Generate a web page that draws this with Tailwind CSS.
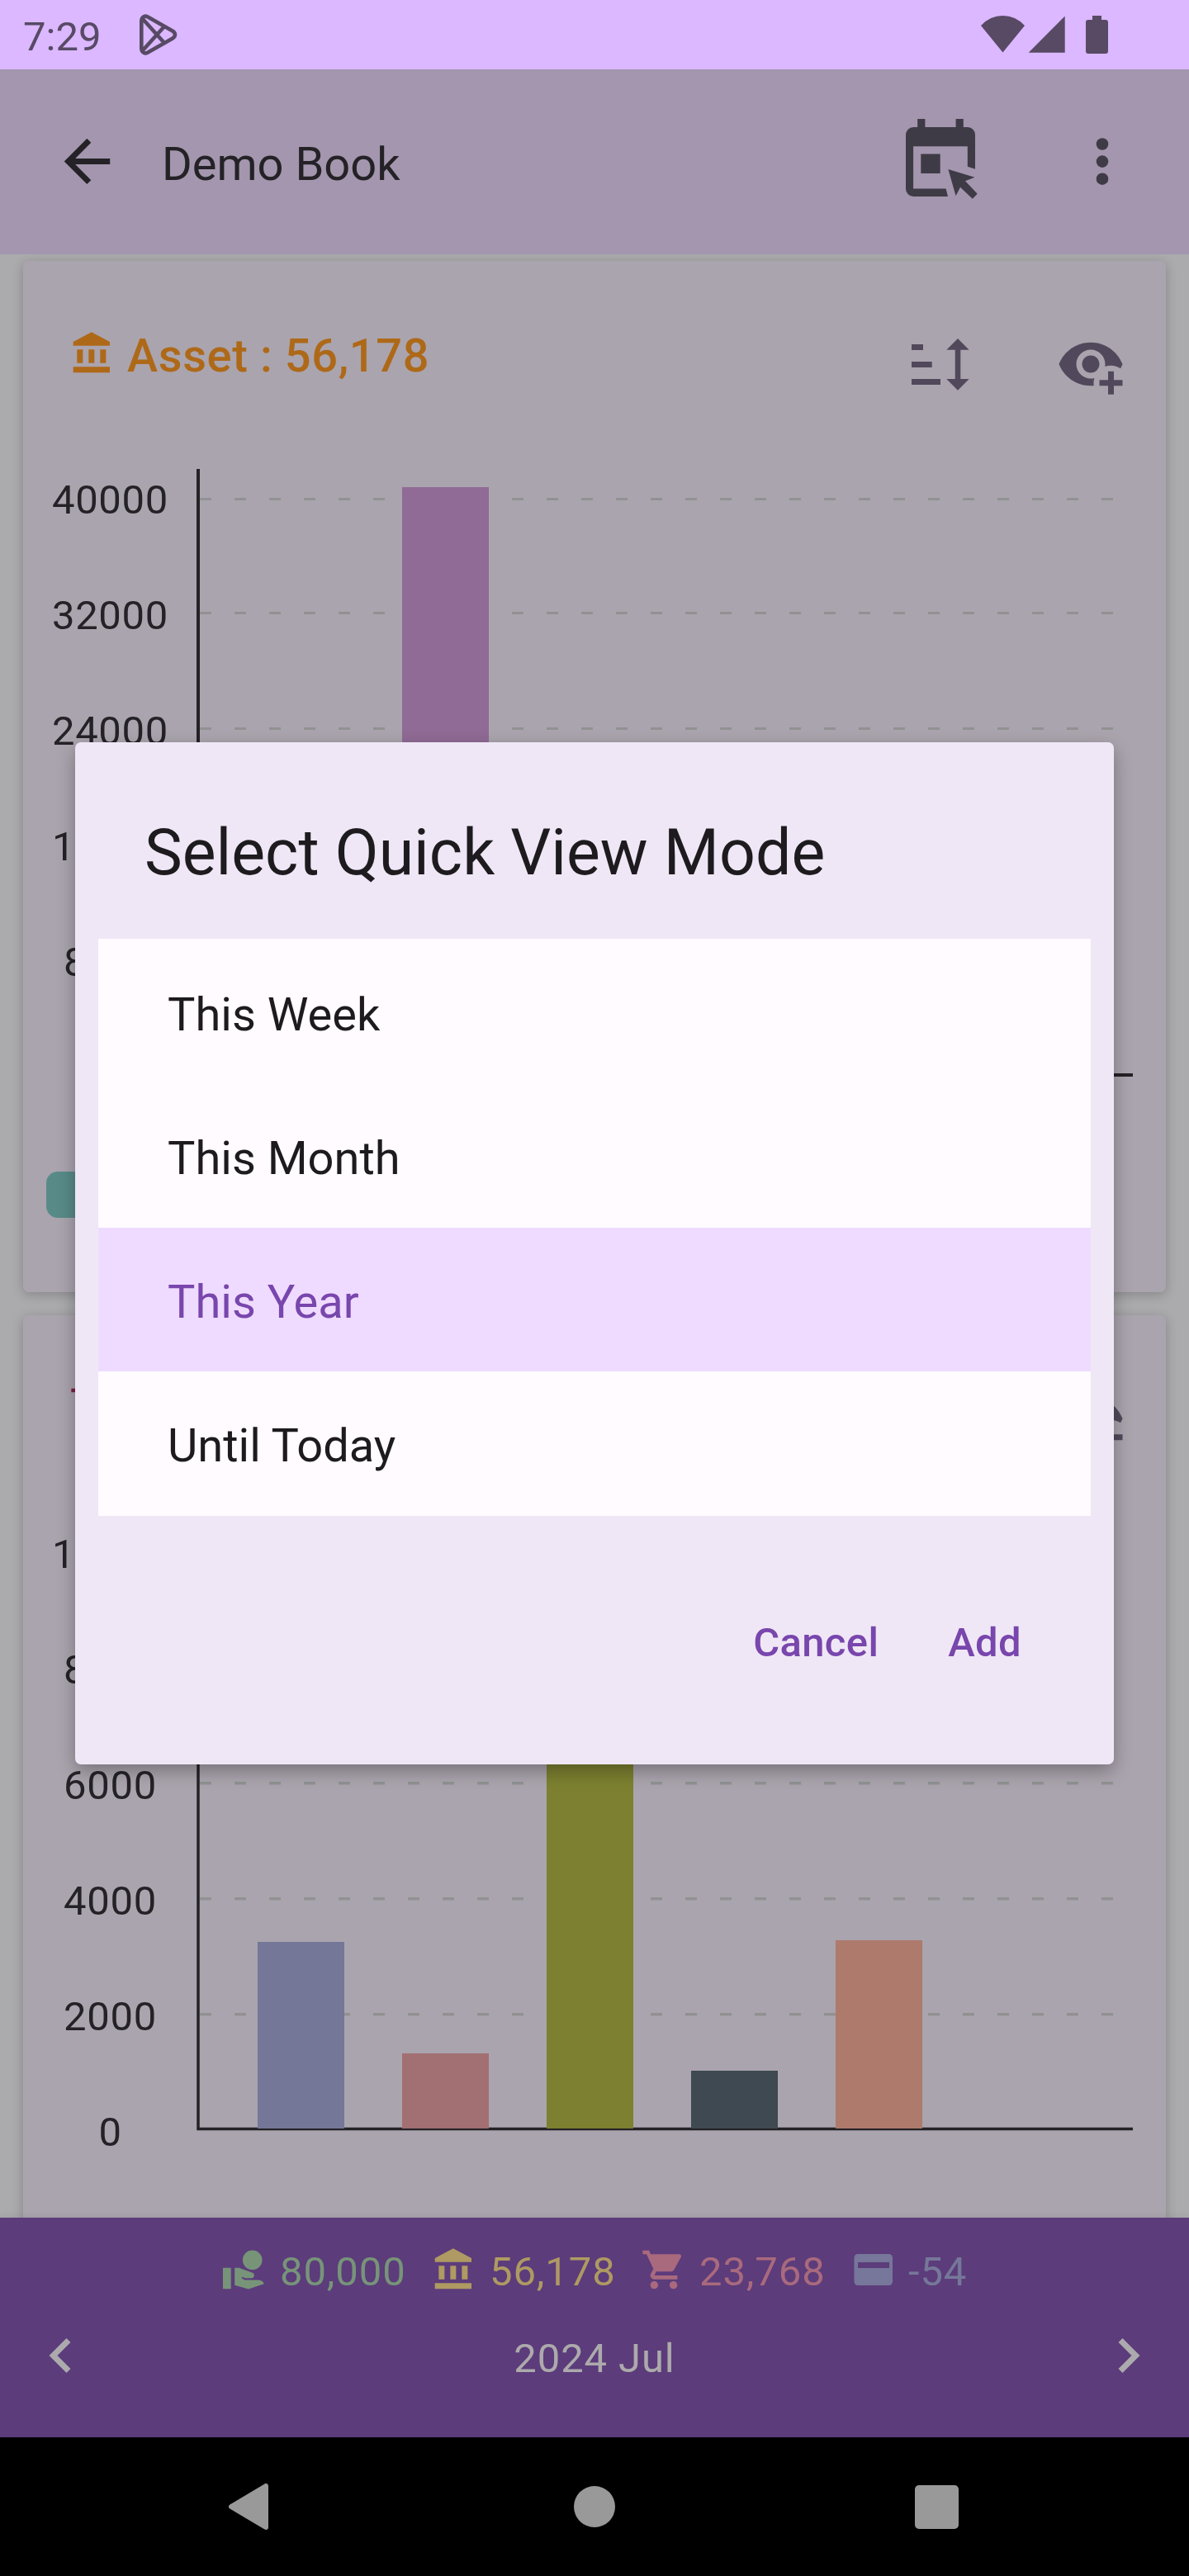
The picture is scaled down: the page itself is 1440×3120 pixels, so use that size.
<!DOCTYPE html>
<html lang="en">
<head>
<meta charset="utf-8">
<title>Demo Book</title>
<script src="https://cdn.jsdelivr.net/npm/@tailwindcss/browser@4"></script>
</head>
<body class="bg-black">
<svg class="hidden">
  <symbol id="bank" viewBox="0 0 24 24"><path d="M11.5,1L2,6V8H21V6M16,10V17H19V10M2,22H21V19H2M10,10V17H13V10M4,10V17H7V10H4Z"/></symbol>
  <symbol id="cart" viewBox="0 0 24 24"><path d="M17,18C15.89,18 15,18.89 15,20A2,2 0 0,0 17,22A2,2 0 0,0 19,20C19,18.89 18.1,18 17,18M1,2V4H3L6.6,11.59L5.24,14.04C5.09,14.32 5,14.65 5,15A2,2 0 0,0 7,17H19V15H7.42A0.25,0.25 0 0,1 7.17,14.75C7.17,14.7 7.18,14.66 7.2,14.63L8.1,13H15.55C16.3,13 16.96,12.58 17.3,11.97L20.88,5.5C20.95,5.34 21,5.17 21,5A1,1 0 0,0 20,4H5.21L4.27,2M7,18C5.89,18 5,18.89 5,20A2,2 0 0,0 7,22A2,2 0 0,0 9,20C9,18.89 8.1,18 7,18Z"/></symbol>
  <symbol id="eye-plus" viewBox="0 0 24 24"><path d="M12 4.5C7 4.5 2.73 7.61 1 12C2.73 16.39 7 19.5 12 19.5C12.36 19.5 12.72 19.5 13.08 19.45C13.03 19.13 13 18.82 13 18.5C13 17.94 13.08 17.38 13.24 16.83C12.83 16.94 12.42 17 12 17C9.24 17 7 14.76 7 12S9.24 7 12 7 17 9.24 17 12C17 12.29 16.97 12.59 16.92 12.88C17.58 12.63 18.29 12.5 19 12.5C20.17 12.5 21.31 12.84 22.29 13.5C22.56 13 22.8 12.5 23 12C21.27 7.61 17 4.5 12 4.5M12 9C10.34 9 9 10.34 9 12S10.34 15 12 15 15 13.66 15 12 13.66 9 12 9M18 14.5V17.5H15V19.5H18V22.5H20V19.5H23V17.5H20V14.5H18Z"/></symbol>
  <symbol id="sort" viewBox="0 0 70 64"><path d="M0 7h14v7H0zM0 28h24.700v7H0zM0 49h35v7H0zM56 0l13.700 13.700H59.300V49H69.700L56 62.700 42.300 49H52.700V13.700H42.300z"/></symbol>
</svg>

<div class="relative flex h-[3120px] w-[1440px] flex-col overflow-hidden font-['Roboto',sans-serif] text-[#242226]">

  <!-- status bar -->
  <header class="flex h-[84px] shrink-0 items-center bg-[#dbb8ff] pl-7 text-[#584a65]">
    <span class="w-[141px] pt-[5px] text-[49px] leading-none">7:29</span>
    <svg class="h-[50px] w-[46px]" viewBox="0 0 46 50" fill="none" stroke="currentColor" stroke-width="4.600" stroke-linejoin="round"><path d="M2.300 8.500C2.300 3.500 7 1 10.500 3.800L40 20.500C44 23 44 27 40 29.500L10.500 46.200C7 49 2.300 46.500 2.300 41.500ZM3 5L30.500 35.500M3 45L30.500 14.500"/></svg>
    <svg class="ml-[972px] h-[50px] w-[156px]" viewBox="1187 17 156 50" fill="currentColor"><path d="M1188 31Q1199 19 1214.500 19T1241 31L1214.500 63.500ZM1289.700 19.500V63.700H1245.700ZM1323 19h11v5h5a3 3 0 0 1 3 3v35a3 3 0 0 1-3 3h-21a3 3 0 0 1-3-3v-35a3 3 0 0 1 3-3h5z"/></svg>
  </header>

  <!-- app bar -->
  <nav class="flex h-[224px] shrink-0 items-center bg-[#a396ae]">
    <svg class="ml-[77px] h-[56px] w-[57px]" viewBox="77 168 57 56" fill="none" stroke="#242226" stroke-width="7"><path d="M133.200 195.500H82M107.800 170.300L82.700 195.500L107.800 220.600"/></svg>
    <h1 class="ml-[62px] w-[300px] pt-[6px] text-[56px] leading-none whitespace-nowrap">Demo Book</h1>
    <svg class="ml-[600px] h-[106px] w-[88px]" viewBox="1096 143 88 106" fill="#3f3b46"><path fill-rule="evenodd" d="M1111.200 144h9.200v10h37.200v-10h9.200v10h5.200a9.300 9.300 0 0 1 9 9.300V204.700L1171.800 201.700V177.200H1106.100V228.500H1145.600L1148 238H1106.300a9.300 9.300 0 0 1-9.300-9.300V163.300a9.300 9.300 0 0 1 9.300-9.300h4.900z"/><path d="M1115.300 186.500h23.400v23.500h-23.400zM1148.400 205l32.100 9.700-11.500 4.600 14.700 15.400-5.900 6-14.800-14-5.400 10.600z"/></svg>
    <svg class="ml-[142px] h-[58px] w-[18px]" viewBox="0 0 18 58" fill="#3f3b46"><circle cx="9" cy="7.500" r="7.300"/><circle cx="9" cy="28.600" r="7.300"/><circle cx="9" cy="49.700" r="7.300"/></svg>
  </nav>

  <!-- scrolling report cards -->
  <main class="flex h-[2378px] shrink-0 flex-col gap-7 overflow-hidden bg-[#ababad] px-7 pt-2">
    <section class="h-[1249px] shrink-0 rounded-[7px] bg-[#aaa4ae] shadow-[0_3px_14px_rgba(0,0,0,0.22)]">
      <div class="flex h-[252px] items-start text-[#51495b]">
        <svg class="mt-[84px] ml-14 size-14 fill-[#ae6918]"><use href="#bank"/></svg>
        <h2 class="mt-[87px] ml-[14px] w-[900px] text-[56px] leading-none font-medium tracking-[0.6px] text-[#ae6918]">Asset : 56,178</h2>
        <svg class="mt-[94px] ml-[50px] h-16 w-[70px] shrink-0" fill="currentColor"><use href="#sort"/></svg>
        <svg class="mt-[83px] ml-[105px] size-[84px] shrink-0" fill="currentColor"><use href="#eye-plus"/></svg>
      </div>
      <div class="flex h-[851px]">
        <div class="w-[210px] pt-[13px] pl-px text-center text-[49px] leading-none tracking-[0.7px]">
          <div class="h-[140px]">40000</div><div class="h-[140px]">32000</div><div class="h-[140px]">24000</div><div class="h-[140px]">16000</div><div class="h-[140px]">8000</div><div class="h-[140px]">0</div>
        </div>
        <svg class="h-[736px] w-[1134px]" viewBox="0 0 1134 736">
          <path d="M4 36.500H1110M4 174.500H1110M4 314.500H1110M4 454.500H1110M4 594.500H1110" stroke="#919192" stroke-width="3" stroke-dasharray="14 28"/>
          <path d="M2 0V734H1134" fill="none" stroke="#242226" stroke-width="4"/>
          <rect x="249" y="22" width="105" height="712" fill="#906b95"/>
        </svg>
      </div>
      <div class="ml-7 h-14 w-[140px] rounded-[14px] bg-[#588b88]"></div>
    </section>

    <section class="h-[1249px] shrink-0 rounded-[7px] bg-[#aaa4ae] shadow-[0_3px_14px_rgba(0,0,0,0.22)]">
      <div class="flex h-[252px] items-start text-[#51495b]">
        <svg class="mt-[84px] ml-14 size-14 fill-[#7c1f45]"><use href="#cart"/></svg>
        <h2 class="mt-[87px] ml-[14px] w-[900px] text-[56px] leading-none font-medium tracking-[0.6px] text-[#7c1f45]">Expense : 23,768</h2>
        <svg class="mt-[94px] ml-[50px] h-16 w-[70px] shrink-0" fill="currentColor"><use href="#sort"/></svg>
        <svg class="mt-[83px] ml-[105px] size-[84px] shrink-0" fill="currentColor"><use href="#eye-plus"/></svg>
      </div>
      <div class="flex h-[851px]">
        <div class="w-[210px] pt-[13px] pl-px text-center text-[49px] leading-none tracking-[0.7px]">
          <div class="h-[140px]">10000</div><div class="h-[140px]">8000</div><div class="h-[140px]">6000</div><div class="h-[140px]">4000</div><div class="h-[140px]">2000</div><div class="h-[140px]">0</div>
        </div>
        <svg class="h-[736px] w-[1134px]" viewBox="0 0 1134 736">
          <path d="M4 34.700H1110M4 174.700H1110M4 314.700H1110M4 454.700H1110M4 594.700H1110" stroke="#919192" stroke-width="3.500" stroke-dasharray="14 28"/>
          <path d="M2 0V733.500H1134" fill="none" stroke="#242226" stroke-width="3.500"/>
          <rect x="74" y="507" width="105" height="226" fill="#747797"/>
          <rect x="249" y="642" width="105" height="91" fill="#a26f72"/>
          <rect x="424" y="100" width="105" height="633" fill="#7c8030"/>
          <rect x="599" y="663" width="105" height="70" fill="#3e4951"/>
          <rect x="774" y="505" width="105" height="228" fill="#ae7a6c"/>
        </svg>
      </div>
    </section>
  </main>

  <!-- totals and period -->
  <footer class="z-10 flex h-[266px] shrink-0 flex-col bg-[#5c3c7b] pt-[35px] text-[49px] leading-none tracking-[0.875px] shadow-[0_-2px_8px_rgba(0,0,0,0.06)]">
    <div class="flex h-14 pl-[268px]">
      <div class="flex w-[254px] gap-[15px] text-[#779479]">
        <svg class="size-14" viewBox="0 0 56 56" fill="currentColor"><circle cx="37.700" cy="16.300" r="11.800"/><path d="M2 25.700h9.700v25.600H2zM16.200 25.700h5.200l16.500 6c3 1.100 2.400 6.600-1.200 6.600h-7.600l-4-1.600-.6 1.600 4 2.300h15.600c4.400 0 7.500 2.300 7.500 4.600L33 51.500 16.200 46.800z"/></svg>
        <span class="mt-[6px]">80,000</span>
      </div>
      <div class="flex w-[254px] gap-[15px] text-[#ae9a62]">
        <svg class="size-14" fill="currentColor"><use href="#bank"/></svg>
        <span class="mt-[6px]">56,178</span>
      </div>
      <div class="flex w-[254px] gap-[15px] text-[#a96a7e]">
        <svg class="size-14" fill="currentColor"><use href="#cart"/></svg>
        <span class="mt-[6px]">23,768</span>
      </div>
      <div class="flex gap-[14px] text-[#76779a]">
        <svg class="size-14" viewBox="0 0 56 56" fill="currentColor"><path fill-rule="evenodd" d="M9 9h37.500a4.500 4.500 0 0 1 4.500 4.500V42.500a4.500 4.500 0 0 1-4.500 4.500H9a4.500 4.500 0 0 1-4.500-4.500V13.500A4.500 4.500 0 0 1 9 9zM9 19v7h38v-7z"/></svg>
        <span class="mt-[6px]">-54</span>
      </div>
    </div>
    <div class="mt-[51px] flex h-[50px] items-center justify-between px-[59px] text-[#acaaac]">
      <svg class="h-[42px] w-[27px]" viewBox="0 0 27 42" fill="currentColor"><path d="M26.500 5L10.500 21L26.500 37L21.500 42L.5 21L21.500 0z"/></svg>
      <span class="pt-[6px]">2024 Jul</span>
      <svg class="h-[42px] w-[27px]" viewBox="0 0 27 42" fill="currentColor"><path d="M.5 5L16.500 21L.5 37L5.500 42L26.500 21L5.500 0z"/></svg>
    </div>
  </footer>

  <!-- system navigation -->
  <div class="z-10 flex h-[168px] shrink-0 items-center bg-black pl-[276px]">
    <svg class="h-[58px] w-[50px]" viewBox="0 0 50 58" fill="#999" stroke="#999" stroke-width="6" stroke-linejoin="round"><path d="M4 29L46 4V54z"/></svg>
    <div class="ml-[369px] size-[50px] rounded-full bg-[#999]"></div>
    <div class="ml-[363px] size-[53px] rounded-[5px] bg-[#999]"></div>
  </div>

  <!-- quick view mode dialog -->
  <div class="absolute top-[899px] left-[91px] z-20 h-[1238px] w-[1258px] rounded-[7px] bg-[#efe7f6] px-7 text-[#1d1b1e] shadow-[0_8px_22px_rgba(0,0,0,0.3)]" role="dialog">
    <h2 class="h-[238px] pt-[96px] pl-14 text-[77px] leading-none whitespace-nowrap">Select Quick View Mode</h2>
    <ul class="flex h-[699px] flex-col bg-[#fffbff] text-[56px] leading-none">
      <li class="flex h-[175px] items-center pt-2 pl-[84px]">This Week</li>
      <li class="flex h-[175px] items-center pt-[6px] pl-[84px]">This Month</li>
      <li class="flex h-[174px] items-center bg-[#efdbff] pt-[6px] pl-[84px] text-[#7846ac]">This Year</li>
      <li class="flex h-[175px] items-center pt-[5px] pl-[84px]">Until Today</li>
    </ul>
    <div class="flex justify-end gap-[84px] pt-[129px] pr-[84px] text-[49px] leading-none font-medium tracking-[0.35px] text-[#7846ac]">
      <button>Cancel</button>
      <button>Add</button>
    </div>
  </div>
</div>
</body>
</html>
